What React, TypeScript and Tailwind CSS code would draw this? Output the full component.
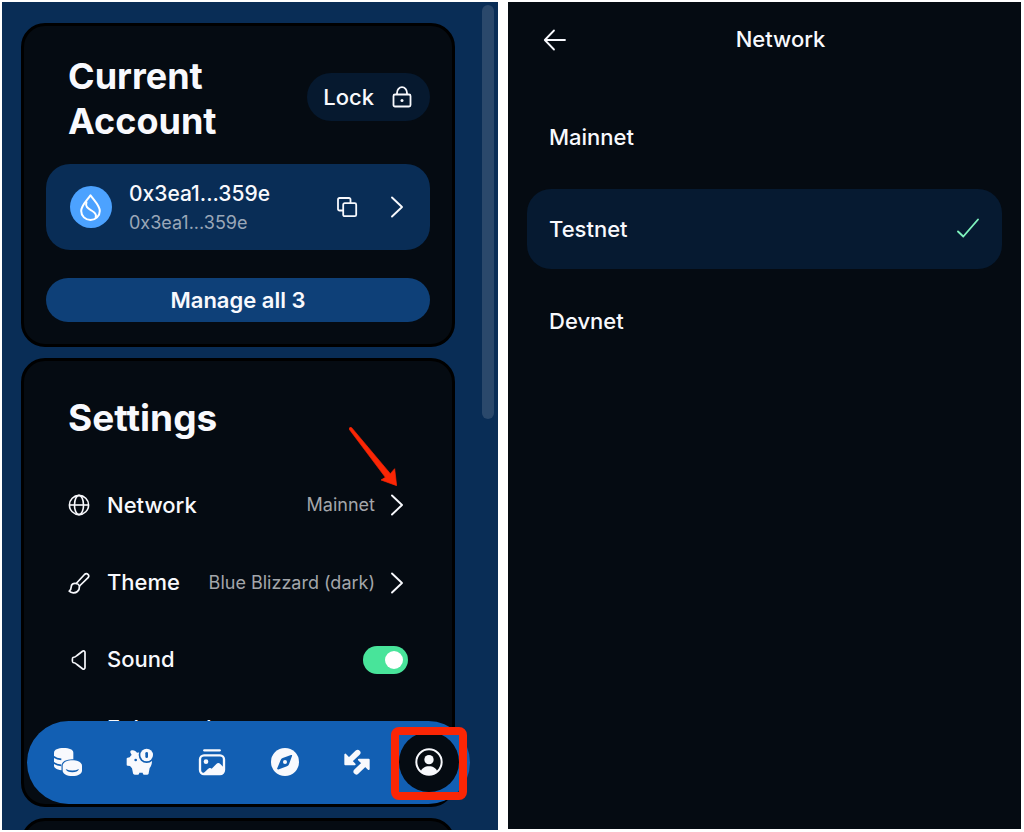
import { useState } from "react"

type IconProps = { className?: string }

const ChevronIcon = ({ className }: IconProps) => (
  <svg viewBox="0 0 24 24" className={className} fill="none" stroke="currentColor" strokeWidth="1.9" strokeLinecap="round" strokeLinejoin="round">
    <path d="M8 2.5 18 12 8 21.5" />
  </svg>
)

const LockIcon = ({ className }: IconProps) => (
  <svg viewBox="0 0 24 24" className={className} fill="none" stroke="currentColor" strokeWidth="1.8" strokeLinejoin="round">
    <rect x="3.5" y="9.5" width="17" height="12" rx="1.5" />
    <path d="M7 9.5V8a5 5.800 0 0 1 10 0v1.500" />
    <circle cx="12" cy="15.500" r="1.500" fill="currentColor" stroke="none" />
  </svg>
)

const CopyIcon = ({ className }: IconProps) => (
  <svg viewBox="0 0 24 24" className={className} fill="none" stroke="currentColor" strokeWidth="1.8" strokeLinejoin="round">
    <rect x="8.2" y="8.2" width="13" height="13" rx="1.5" />
    <path d="M8 15.5H4.5A1.5 1.5 0 0 1 3 14V4.5A1.5 1.5 0 0 1 4.5 3H14A1.5 1.5 0 0 1 15.5 4.5V8" />
  </svg>
)

const DropIcon = ({ className }: IconProps) => (
  <svg viewBox="0 0 42 42" className={className}>
    <circle cx="21" cy="21" r="21" fill="#4ca2ff" />
    <path d="M20.5 9.3C17 14.5 11.2 19.5 11.2 25a9.3 9 0 0 0 18.6 0C29.8 19.5 24 14.5 20.5 9.3Z" fill="none" stroke="#fff" strokeWidth="2" strokeLinejoin="round" />
    <path d="M16.5 15.5C15 21 18 22.5 21.5 24.5S27 29 25.5 32" fill="none" stroke="#fff" strokeWidth="2" />
  </svg>
)

const GlobeIcon = ({ className }: IconProps) => (
  <svg viewBox="0 0 22 22" className={className} fill="none" stroke="currentColor" strokeWidth="1.6">
    <circle cx="11" cy="11" r="9.6" />
    <ellipse cx="11" cy="11" rx="4.5" ry="9.6" />
    <path d="M1.5 11h19" />
  </svg>
)

const BrushIcon = ({ className }: IconProps) => (
  <svg viewBox="0 0 22 22" className={className} fill="none" stroke="currentColor" strokeWidth="1.7" strokeLinecap="round" strokeLinejoin="round">
    <path d="M8.2 11.5 16.5 2.5c2.5-2.2 5.500.6 3.600 3.200L11.5 14" />
    <path d="M8.2 11.5c-3-.8-5 1-5 3.5 0 2-.7 3.2-2 4.2 2 2 6 2.2 8.2.3 1.6-1.4 2.2-3.3 2.1-5.5a4 4 0 0 0-3.3-2.5Z" />
  </svg>
)

const SpeakerIcon = ({ className }: IconProps) => (
  <svg viewBox="0 0 22 22" className={className} fill="none" stroke="currentColor" strokeWidth="1.7" strokeLinejoin="round">
    <path d="M5 8.500C6.500 8.300 8 7.500 9 6.500l5.500-4.200c1.200-.9 2.500-.2 2.500 1.200v15c0 1.400-1.300 2-2.500 1.200L9 15.500c-1-1-2.500-1.800-4-2-.8-.3-.9-4.600 0-5Z" />
  </svg>
)

const BackIcon = ({ className }: IconProps) => (
  <svg viewBox="0 0 24 24" className={className} fill="none" stroke="currentColor" strokeWidth="1.8" strokeLinecap="round" strokeLinejoin="round">
    <path d="M22 12H2M11 2.5 1.8 12 11 21.5" />
  </svg>
)

const CheckIcon = ({ className }: IconProps) => (
  <svg viewBox="0 0 24 24" className={className} fill="none" stroke="currentColor" strokeWidth="1.9" strokeLinecap="round" strokeLinejoin="round">
    <path d="M2 14.5 7.300 19.5 22 2.5" />
  </svg>
)

const CoinsIcon = ({ className }: IconProps) => (
  <svg viewBox="0 0 84 84" className={className}>
    <path d="M0 14C0 5 12 0 29 0s29 5 29 14v36L28 67C12 66 0 61 0 53Z" fill="currentColor" />
    <path d="M-1 26q8 7 23 8M-1 44q8 7 23 8" fill="none" stroke="#125fb3" strokeWidth="5" />
    <path d="M26 53c0-9 12-16 29-16s29 7 29 16v15c0 9-12 16-29 16s-29-7-29-16Z" fill="currentColor" stroke="#125fb3" strokeWidth="7" paintOrder="stroke" />
    <path d="M35 63q20 9 40 0-4 10-20 10t-20-10Z" fill="#125fb3" />
  </svg>
)

const PiggyIcon = ({ className }: IconProps) => (
  <svg viewBox="0 0 84 84" className={className}>
    <path d="M14 8c8-3 15 0 19 6 5-1 10-1 15 0l30 24c0 10-3 18-7 22l-3 16c0 3-2 4-4 4h-9c-3 0-4-2-5-6H40c-1 4-2 6-5 6h-9c-2 0-4-1-5-4l-3-15-6-7-7-1c-2 0-3-1-3-3V32c0-2 1-3 3-3l6-1c2-3 3-5 6-7-2-4-4-6-4-9 0-2 0-3 1-4Z" fill="currentColor" />
    <circle cx="29" cy="36" r="4" fill="#125fb3" />
    <circle cx="62" cy="21" r="24" fill="#125fb3" />
    <circle cx="62" cy="21" r="19" fill="currentColor" />
    <rect x="58" y="12" width="8" height="18" rx="4" fill="#125fb3" />
  </svg>
)

const GalleryIcon = ({ className }: IconProps) => (
  <svg viewBox="0 0 84 84" className={className}>
    <path d="M19 7h46" stroke="currentColor" strokeWidth="7" strokeLinecap="round" />
    <rect x="6" y="22" width="72" height="56" rx="12" fill="none" stroke="currentColor" strokeWidth="7" />
    <circle cx="24" cy="41" r="7" fill="currentColor" />
    <path d="M14 78 29 64c5-5 9-5 12-2l14-14c4-4 8-4 12 0l11 11v9c0 8-4 12-12 12Z" fill="currentColor" />
  </svg>
)

const CompassIcon = ({ className }: IconProps) => (
  <svg viewBox="0 0 84 84" className={className}>
    <circle cx="42" cy="42" r="42" fill="currentColor" />
    <path d="M20 64c-2-1-2-2-1-4l10-24c1-3 3-5 6-6l25-9c3-1 4 0 3 3l-9 25c-1 3-3 5-6 6L24 64c-2 1-3 1-4 0Z" fill="#125fb3" />
    <circle cx="42" cy="42" r="6" fill="currentColor" />
  </svg>
)

const SwapIcon = ({ className }: IconProps) => (
  <svg viewBox="0 0 84 84" className={className} fill="currentColor" stroke="currentColor" strokeLinecap="round" strokeLinejoin="round">
    <path d="M7 20v29h28Z" strokeWidth="6" />
    <path d="M24 33 44 14" strokeWidth="17" />
    <path d="M48 35h29v28Z" strokeWidth="6" />
    <path d="M62 50 40 71" strokeWidth="17" />
  </svg>
)

const ProfileIcon = ({ className }: IconProps) => (
  <svg viewBox="0 0 84 84" className={className}>
    <circle cx="42" cy="42" r="38" fill="none" stroke="currentColor" strokeWidth="6" />
    <circle cx="42" cy="35" r="14" fill="currentColor" />
    <path d="M17 71c3-10 13-16 25-16s22 6 25 16c-7 5-15 8-25 8s-18-3-25-8Z" fill="currentColor" />
  </svg>
)

// hand-drawn pointer for the Network row
const PointerArrow = () => (
  <svg viewBox="0 0 144 177" className="absolute right-[11px] -top-[39px] w-12 h-[59px] pointer-events-none" fill="#fb2605" aria-hidden="true">
    <path d="M0 6Q1 -1 8 2L124 140 137 125 143 176 96 159 109 151Z" stroke="#fb2605" strokeWidth="2" strokeLinejoin="round" />
  </svg>
)

const navItems = [
  { name: 'Coins', Icon: CoinsIcon },
  { name: 'Stake', Icon: PiggyIcon },
  { name: 'Gallery', Icon: GalleryIcon },
  { name: 'Explore', Icon: CompassIcon },
  { name: 'Swap', Icon: SwapIcon },
  { name: 'Profile', Icon: ProfileIcon },
]

const networks = ['Mainnet', 'Testnet', 'Devnet']

const AccountCard = () => (
  <section className="bg-[#050b12] border-3 border-black rounded-3xl px-[22px] pt-7 pb-[22px]">
    <div className="flex items-center justify-between pl-[22px]">
      <h1 className="text-4xl leading-[45px] font-bold w-40">Current Account</h1>
      <button className="flex items-center gap-4 h-12 px-4 mb-1 rounded-full bg-[#06192f] font-medium">
        Lock
        <LockIcon className="size-6" />
      </button>
    </div>
    <div className="flex items-center mt-5 h-[86px] pl-6 pr-[22px] rounded-3xl bg-[#092d56]">
      <DropIcon className="size-[42px] shrink-0" />
      <div className="flex-1 ml-[17px] mt-0.5">
        <p className="text-[21px] leading-[30px] font-medium">0x3ea1...359e</p>
        <p className="text-lg leading-7 text-[#9aa7b8]">0x3ea1...359e</p>
      </div>
      <button aria-label="Copy address"><CopyIcon className="size-6" /></button>
      <button aria-label="Account details" className="ml-[25px]"><ChevronIcon className="size-6" /></button>
    </div>
    <button className="block w-full mt-7 h-11 rounded-full bg-[#0e4078] font-semibold">Manage all 3</button>
  </section>
)

const SettingsCard = () => {
  const [sound, setSound] = useState(true)

  return (
    <section className="bg-[#050b12] border-3 border-black rounded-3xl px-11 pt-[34px] pb-11">
      <h2 className="text-[37px] leading-[45px] font-bold mb-[26px]">Settings</h2>
      <button className="relative flex items-center w-full h-[78px]">
        <GlobeIcon className="size-[22px]" />
        <span className="ml-[17px] font-medium">Network</span>
        <span className="ml-auto mr-[9px] text-lg text-[#a3a6aa]">Mainnet</span>
        <ChevronIcon className="size-6" />
        <PointerArrow />
      </button>
      <button className="flex items-center w-full h-[77px]">
        <BrushIcon className="size-[22px]" />
        <span className="ml-[17px] font-medium">Theme</span>
        <span className="ml-auto mr-[9px] text-lg text-[#a3a6aa]">Blue Blizzard (dark)</span>
        <ChevronIcon className="size-6" />
      </button>
      <label className="flex items-center h-[77px]">
        <SpeakerIcon className="size-[22px]" />
        <span className="ml-[17px] mr-auto font-medium">Sound</span>
        <input
          type="checkbox"
          role="switch"
          checked={sound}
          onChange={(e) => setSound(e.target.checked)}
          className="appearance-none w-[45px] h-7 rounded-full bg-slate-600 checked:bg-[#48e49a] p-[5px] before:block before:size-[18px] before:rounded-full before:bg-white checked:before:ml-[17px]"
        />
      </label>
      <div className="pl-[39px] pt-3.5 h-[62px] font-medium">Enhanced</div>
    </section>
  )
}

const BottomNav = () => (
  <nav className="absolute left-[25px] right-7 bottom-[26px] h-[83px] px-[11px] pb-0.5 flex items-center justify-between rounded-full bg-[#125fb3]">
    {navItems.map(({ name, Icon }) => {
      const active = name === 'Profile'
      return (
        <button key={name} aria-label={name} className={active ? "relative size-[60px] flex items-center justify-center rounded-full bg-[#050b12]" : "size-[60px] flex items-center justify-center"}>
          <Icon className="size-7" />
          {active && <span className="absolute -inset-x-2 -top-[5px] -bottom-2 border-8 border-[#fb2605] rounded-lg" />}
        </button>
      )
    })}
  </nav>
)

const WalletPanel = () => (
  <main className="relative overflow-hidden bg-[#092d56]">
    <div className="absolute inset-0 overflow-hidden">
      <div className="flex flex-col gap-[11px] pl-[19px] pr-[43px] pt-[21px]">
        <AccountCard />
        <SettingsCard />
        <section className="bg-[#050b12] border-3 border-black rounded-3xl h-40" />
      </div>
    </div>
    <div className="absolute right-1 top-[3px] w-3 h-1/2 rounded-full bg-[#2a486b]" />
    <BottomNav />
  </main>
)

const NetworkPanel = () => {
  const [selected, setSelected] = useState('Testnet')

  return (
    <section className="bg-[#050b12] px-[19px] mb-px">
      <header className="relative flex items-center justify-center h-[75px] pl-8">
        <button aria-label="Back" className="absolute left-4"><BackIcon className="size-6" /></button>
        <h2 className="font-medium">Network</h2>
      </header>
      <div className="flex flex-col gap-3 mt-5">
        {networks.map((network) => (
          <label key={network} className="flex items-center justify-between h-20 px-[22px] rounded-3xl font-medium has-checked:bg-[#061a31]">
            <input type="radio" name="network" className="sr-only" checked={selected === network} onChange={() => setSelected(network)} />
            {network}
            {selected === network && <CheckIcon className="size-6 text-[#7ef2bd]" />}
          </label>
        ))}
      </div>
    </section>
  )
}

const App = () => {
  return (
    <div className="grid grid-cols-[496fr_513fr] gap-2.5 min-h-screen pl-0.5 pr-[3px] py-0.5 bg-white text-[#f8f9fd] text-[22px] font-['Inter',sans-serif]">
      <WalletPanel />
      <NetworkPanel />
    </div>
  )
}

export default App
